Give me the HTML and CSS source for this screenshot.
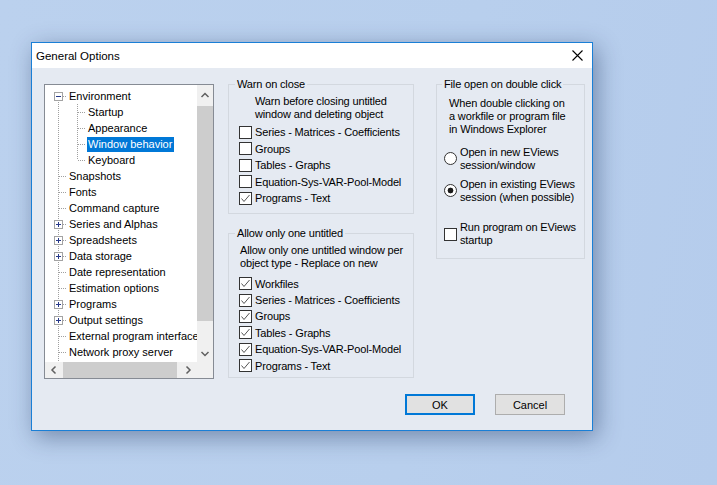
FILE: index.html
```html
<!DOCTYPE html>
<html lang="en">
<head>
<meta charset="utf-8">
<title>General Options</title>
<link rel="stylesheet" href="styles.css">
</head>
<body>
<div class="desktop">
  <div class="dialog">
    <div class="titlebar">
      <span class="title">General Options</span>
      <svg class="close" width="11" height="11" viewBox="0 0 11 11"><path d="M0.5 0.5 L10.5 10.5 M10.5 0.5 L0.5 10.5" stroke="#000" stroke-width="1.1" fill="none"/></svg>
    </div>
    <div class="body">
      <div class="main">
        <div class="tree">
          <div class="tree-view">
            <div class="row"><span class="c c-first"><span class="tog"></span></span><span class="lbl">Environment</span></div>
            <div class="row"><span class="c c-i"></span><span class="c c-t"></span><span class="lbl">Startup</span></div>
            <div class="row"><span class="c c-i"></span><span class="c c-t"></span><span class="lbl">Appearance</span></div>
            <div class="row"><span class="c c-i"></span><span class="c c-t"></span><span class="lbl sel">Window behavior</span></div>
            <div class="row"><span class="c c-i"></span><span class="c c-l"></span><span class="lbl">Keyboard</span></div>
            <div class="row"><span class="c c-t"></span><span class="lbl">Snapshots</span></div>
            <div class="row"><span class="c c-t"></span><span class="lbl">Fonts</span></div>
            <div class="row"><span class="c c-t"></span><span class="lbl">Command capture</span></div>
            <div class="row"><span class="c c-t"><span class="tog plus"></span></span><span class="lbl">Series and Alphas</span></div>
            <div class="row"><span class="c c-t"><span class="tog plus"></span></span><span class="lbl">Spreadsheets</span></div>
            <div class="row"><span class="c c-t"><span class="tog plus"></span></span><span class="lbl">Data storage</span></div>
            <div class="row"><span class="c c-t"></span><span class="lbl">Date representation</span></div>
            <div class="row"><span class="c c-t"></span><span class="lbl">Estimation options</span></div>
            <div class="row"><span class="c c-t"><span class="tog plus"></span></span><span class="lbl">Programs</span></div>
            <div class="row"><span class="c c-t"><span class="tog plus"></span></span><span class="lbl">Output settings</span></div>
            <div class="row"><span class="c c-t"></span><span class="lbl">External program interface</span></div>
            <div class="row"><span class="c c-t"></span><span class="lbl">Network proxy server</span></div>
          </div>
          <div class="vscroll">
            <div class="sb-btn"><svg width="16" height="20" viewBox="0 0 16 20"><polyline points="4.5,12 8,8.5 11.5,12" stroke="#606060" stroke-width="1.5" fill="none"/></svg></div>
            <div class="vtrack"><div class="vthumb"></div></div>
            <div class="sb-btn"><svg width="16" height="20" viewBox="0 0 16 20"><polyline points="4.5,10 8,13.5 11.5,10" stroke="#606060" stroke-width="1.5" fill="none"/></svg></div>
          </div>
          <div class="hscroll">
            <div class="sb-hbtn"><svg width="17" height="16" viewBox="0 0 17 16"><polyline points="10.5,4.5 7,8 10.5,11.5" stroke="#606060" stroke-width="1.5" fill="none"/></svg></div>
            <div class="htrack"><div class="hthumb"></div></div>
            <div class="sb-hbtn"><svg width="17" height="16" viewBox="0 0 17 16"><polyline points="6.5,4.5 10,8 6.5,11.5" stroke="#606060" stroke-width="1.5" fill="none"/></svg></div>
          </div>
          <div class="corner"></div>
        </div>

        <div class="col-mid">
          <fieldset class="group warn">
            <legend>Warn on close</legend>
            <div class="desc indent">Warn before closing untitled<br>window and deleting object</div>
            <div class="checks">
              <div class="check"><span class="box"></span><span>Series - Matrices - Coefficients</span></div>
              <div class="check"><span class="box"></span><span>Groups</span></div>
              <div class="check"><span class="box"></span><span>Tables - Graphs</span></div>
              <div class="check"><span class="box"></span><span>Equation-Sys-VAR-Pool-Model</span></div>
              <div class="check"><span class="box"><svg width="11" height="11" viewBox="0 0 11 11"><polyline points="1.5,5.5 4,8.5 9.5,2" stroke="#555" stroke-width="1" fill="none"/></svg></span><span>Programs - Text</span></div>
            </div>
          </fieldset>

          <fieldset class="group allow">
            <legend>Allow only one untitled</legend>
            <div class="desc">Allow only one untitled window per<br>object type - Replace on new</div>
            <div class="checks">
              <div class="check"><span class="box"><svg width="11" height="11" viewBox="0 0 11 11"><polyline points="1.5,5.5 4,8.5 9.5,2" stroke="#555" stroke-width="1" fill="none"/></svg></span><span>Workfiles</span></div>
              <div class="check"><span class="box"><svg width="11" height="11" viewBox="0 0 11 11"><polyline points="1.5,5.5 4,8.5 9.5,2" stroke="#555" stroke-width="1" fill="none"/></svg></span><span>Series - Matrices - Coefficients</span></div>
              <div class="check"><span class="box"><svg width="11" height="11" viewBox="0 0 11 11"><polyline points="1.5,5.5 4,8.5 9.5,2" stroke="#555" stroke-width="1" fill="none"/></svg></span><span>Groups</span></div>
              <div class="check"><span class="box"><svg width="11" height="11" viewBox="0 0 11 11"><polyline points="1.5,5.5 4,8.5 9.5,2" stroke="#555" stroke-width="1" fill="none"/></svg></span><span>Tables - Graphs</span></div>
              <div class="check"><span class="box"><svg width="11" height="11" viewBox="0 0 11 11"><polyline points="1.5,5.5 4,8.5 9.5,2" stroke="#555" stroke-width="1" fill="none"/></svg></span><span>Equation-Sys-VAR-Pool-Model</span></div>
              <div class="check"><span class="box"><svg width="11" height="11" viewBox="0 0 11 11"><polyline points="1.5,5.5 4,8.5 9.5,2" stroke="#555" stroke-width="1" fill="none"/></svg></span><span>Programs - Text</span></div>
            </div>
          </fieldset>
        </div>

        <div class="col-right">
          <fieldset class="group fileopen">
            <legend>File open on double click</legend>
            <div class="desc">When double clicking on<br>a workfile or program file<br>in Windows Explorer</div>
            <div class="opt radio1"><span class="radio"></span><span>Open in new EViews<br>session/window</span></div>
            <div class="opt radio2"><span class="radio on"></span><span>Open in existing EViews<br>session (when possible)</span></div>
            <div class="opt runprog"><span class="box"></span><span>Run program on EViews<br>startup</span></div>
          </fieldset>
        </div>
      </div>
      <div class="buttons">
        <button class="btn default">OK</button>
        <button class="btn">Cancel</button>
      </div>
    </div>
  </div>
</div>
</body>
</html>
```

FILE: styles.css
```css
html, body {
  margin: 0;
  padding: 0;
}
body {
  width: 717px;
  height: 485px;
  overflow: hidden;
  font-family: "Liberation Sans", Arial, sans-serif;
  font-size: 11px;
  color: #000;
}
.desktop {
  width: 717px;
  height: 485px;
  box-sizing: border-box;
  padding: 42px 0 0 31px;
  background: linear-gradient(100deg, #bbd1ee 0%, #b8cfed 60%, #b5ccec 100%);
}
.dialog {
  width: 562px;
  height: 389px;
  box-sizing: border-box;
  border: 1px solid #1a7fd6;
  background: #e5eaf2;
  box-shadow: 4px 6px 22px rgba(20, 40, 80, 0.42);
  display: flex;
  flex-direction: column;
}
.titlebar {
  height: 25px;
  flex: none;
  background: #fff;
  display: flex;
  align-items: center;
  justify-content: space-between;
  padding-left: 4px;
}
.title {
  font-size: 11.5px;
}
.close {
  margin-right: 9px;
  display: block;
}
.body {
  flex: 1;
  display: flex;
  flex-direction: column;
}
.main {
  display: flex;
  align-items: flex-start;
  padding: 10px 0 0 12px;
}

/* tree */
.tree {
  width: 170px;
  height: 295px;
  margin-top: 6px;
  margin-right: 14px;
  box-sizing: border-box;
  border: 1px solid #868b94;
  background: #fff;
  display: grid;
  grid-template-columns: 152px 16px;
  grid-template-rows: 277px 16px;
  flex: none;
}
.tree-view {
  overflow: hidden;
  padding: 3px 0 0 4px;
  white-space: nowrap;
}
.row {
  height: 16px;
  display: flex;
  align-items: center;
}
.row:last-child .c-t {
  height: 17px;
  background-size: 1px 17px, 8px 1px;
}
.c {
  --v: repeating-linear-gradient(to bottom, #a0a0a0 0 1px, transparent 1px 2px);
  --h: repeating-linear-gradient(to right, #a0a0a0 0 1px, transparent 1px 2px);
  width: 19px;
  height: 16px;
  flex: none;
  display: flex;
  align-items: flex-start;
  align-self: flex-start;
}
.c-t {
  background: var(--v) 9px 0 / 1px 16px no-repeat, var(--h) 10px 8px / 8px 1px no-repeat;
}
.c-i {
  background: var(--v) 9px 0 / 1px 16px no-repeat;
}
.c-l {
  background: var(--v) 9px 0 / 1px 8px no-repeat, var(--h) 10px 8px / 8px 1px no-repeat;
}
.c-first {
  background: var(--v) 9px 8px / 1px 8px no-repeat, var(--h) 10px 8px / 8px 1px no-repeat;
}
.tog {
  width: 9px;
  height: 9px;
  box-sizing: border-box;
  margin: 4px 0 0 5px;
  border: 1px solid #a3a3a3;
  background: linear-gradient(#27398a, #27398a) center / 5px 1px no-repeat, #fff;
}
.tog.plus {
  background: linear-gradient(#27398a, #27398a) center / 5px 1px no-repeat,
              linear-gradient(#27398a, #27398a) center / 1px 5px no-repeat, #fff;
}
.lbl {
  line-height: 15px;
  padding: 0 2px 0 1px;
}
.lbl.sel {
  background: #0078d7;
  color: #fff;
}
.vscroll {
  background: #f0f0f0;
  display: flex;
  flex-direction: column;
}
.sb-btn {
  height: 20px;
  flex: none;
}
.sb-btn svg, .sb-hbtn svg {
  display: block;
}
.vtrack {
  flex: 1;
}
.vthumb {
  margin-top: 1px;
  height: 215px;
  background: #cdcdcd;
}
.hscroll {
  background: #f0f0f0;
  display: flex;
}
.sb-hbtn {
  width: 17px;
  flex: none;
}
.htrack {
  flex: 1;
}
.hthumb {
  margin-left: 1px;
  width: 114px;
  height: 16px;
  background: #cdcdcd;
}
.corner {
  background: #f0f0f0;
}

/* group boxes */
.col-mid {
  width: 186px;
  margin-right: 22px;
  display: flex;
  flex-direction: column;
  gap: 13px;
  flex: none;
}
.col-right {
  width: 149px;
  flex: none;
}
.group {
  margin: 0;
  padding: 0;
  min-width: 0;
  box-sizing: border-box;
  border: 1px solid #d3d8df;
  letter-spacing: -0.15px;
}
.group legend {
  margin-left: 6px;
  padding: 0 2px;
  line-height: 13px;
}
.warn { height: 136px; }
.allow { height: 151px; }
.fileopen { height: 181px; }
.fileopen legend { margin-left: 5px; }

.desc {
  line-height: 13px;
  margin-top: 4px;
  padding-left: 11px;
}
.desc.indent {
  padding-left: 26px;
}
.warn .desc { margin-bottom: 3px; }
.allow .desc { margin-bottom: 5.5px; }
.check {
  height: 16.5px;
  display: flex;
  align-items: center;
  gap: 3px;
  padding-left: 10px;
}
.allow .check { height: 16.4px; }
.box {
  width: 13px;
  height: 13px;
  box-sizing: border-box;
  border: 1px solid #333;
  background: #fff;
  flex: none;
  display: flex;
}
.box svg { display: block; }

.fileopen .desc {
  margin-top: 5.5px;
  padding-left: 12px;
}
.opt {
  display: flex;
  align-items: center;
  gap: 3px;
  padding-left: 7px;
  line-height: 13px;
}
.radio1 { margin-top: 10.3px; }
.radio2 { margin-top: 6px; }
.runprog { margin-top: 17.4px; }
.radio {
  width: 13px;
  height: 13px;
  box-sizing: border-box;
  border: 1px solid #333;
  border-radius: 50%;
  background: #fff;
  flex: none;
}
.radio.on {
  background: radial-gradient(circle, #1a1a1a 0 2.6px, #fff 3.2px);
}

/* buttons */
.buttons {
  display: flex;
  justify-content: flex-end;
  gap: 20px;
  padding-right: 27px;
  margin-top: 15px;
}
.btn {
  width: 70px;
  height: 21px;
  box-sizing: border-box;
  margin: 0;
  padding: 0;
  border: 1px solid #adadad;
  background: #e1e1e1;
  font-family: "Liberation Sans", Arial, sans-serif;
  font-size: 11px;
  color: #000;
}
.btn.default {
  border: 2px solid #0078d7;
}
```
